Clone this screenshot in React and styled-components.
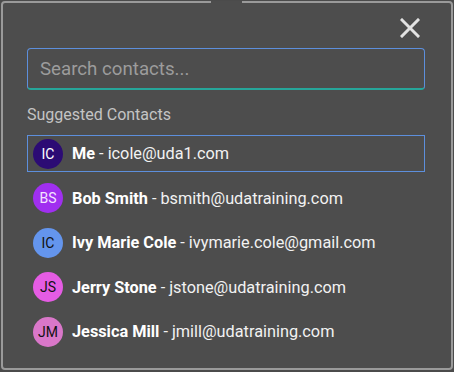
import React from 'react';
import styled, { createGlobalStyle } from 'styled-components';

const GlobalStyle = createGlobalStyle`
  html, body {
    margin: 0;
    padding: 0;
    background: #4b4b4b;
    font-family: Roboto, "Liberation Sans", sans-serif;
  }
`;

const Panel = styled.div`
  position: relative;
  box-sizing: border-box;
  width: 452px;
  height: 369px;
  margin: 1px 0 0 1px;
  border: 2px solid #9a9a9a;
  border-radius: 4px;
  background: #4d4d4d;
  padding: 13px 26px 0 24px;
  display: flex;
  flex-direction: column;

  &::before {
    content: '';
    position: absolute;
    top: -2px;
    left: 208px;
    width: 31px;
    height: 2px;
    background: #4d4d4d;
  }
`;

const TopBar = styled.div`
  display: flex;
  justify-content: flex-end;
  height: 24px;
  padding-right: 4px;
`;

const CloseButton = styled.button`
  border: none;
  background: none;
  padding: 0;
  margin-top: 1px;
  width: 22px;
  height: 22px;
  cursor: pointer;
  display: flex;
  align-items: center;
  justify-content: center;
`;

const SearchBox = styled.input`
  box-sizing: border-box;
  margin-top: 8px;
  width: 398px;
  height: 42px;
  border: 1px solid #5d8fdc;
  border-bottom: 2px solid #26a69a;
  border-radius: 4px;
  background: transparent;
  padding: 0 12px;
  font-family: inherit;
  font-size: 18.7px;
  color: #eee;
  outline: none;

  &::placeholder {
    color: #9c9c9c;
  }
`;

const SectionLabel = styled.div`
  margin-top: 15px;
  font-size: 16px;
  color: #c4c4c4;
  line-height: 20px;
`;

const List = styled.ul`
  list-style: none;
  margin: 10px 0 0;
  padding: 0;
  display: flex;
  flex-direction: column;
  gap: 7.5px;
`;

const Row = styled.li`
  box-sizing: border-box;
  width: 398px;
  height: 37px;
  display: flex;
  align-items: center;
  gap: 9px;
  padding-left: 5px;
  border: 1px solid ${(p) => (p.$active ? '#5d8fdc' : 'transparent')};
  font-size: 16.3px;
  color: #f2f2f2;
  white-space: nowrap;
`;

const Avatar = styled.span`
  flex: none;
  width: 30px;
  height: 30px;
  border-radius: 50%;
  background: ${(p) => p.$bg};
  color: ${(p) => p.$fg};
  font-size: 14px;
  display: flex;
  align-items: center;
  justify-content: center;
`;

const Name = styled.b`
  font-weight: 700;
  color: #ffffff;
`;

const contacts = [
  { initials: 'IC', name: 'Me', email: 'icole@uda1.com', bg: '#2c0b74', fg: '#ffffff', active: true },
  { initials: 'BS', name: 'Bob Smith', email: 'bsmith@udatraining.com', bg: '#a02ff0', fg: '#f4e4ff' },
  { initials: 'IC', name: 'Ivy Marie Cole', email: 'ivymarie.cole@gmail.com', bg: '#6495ed', fg: '#111111' },
  { initials: 'JS', name: 'Jerry Stone', email: 'jstone@udatraining.com', bg: '#e55ce4', fg: '#111111' },
  { initials: 'JM', name: 'Jessica Mill', email: 'jmill@udatraining.com', bg: '#d977c9', fg: '#111111' },
];

const App = () => {
  return (
    <>
      <GlobalStyle />
      <Panel>
        <TopBar>
          <CloseButton aria-label="Close">
            <svg width="20" height="20" viewBox="0 0 20 20">
              <path d="M2 2 L18 18 M18 2 L2 18" stroke="#e2e2e2" strokeWidth="3" strokeLinecap="square" />
            </svg>
          </CloseButton>
        </TopBar>
        <SearchBox placeholder="Search contacts..." />
        <SectionLabel>Suggested Contacts</SectionLabel>
        <List>
          {contacts.map((c) => (
            <Row key={c.email} $active={c.active}>
              <Avatar $bg={c.bg} $fg={c.fg}>{c.initials}</Avatar>
              <span>
                <Name>{c.name}</Name> - {c.email}
              </span>
            </Row>
          ))}
        </List>
      </Panel>
    </>
  );
};

export default App;
